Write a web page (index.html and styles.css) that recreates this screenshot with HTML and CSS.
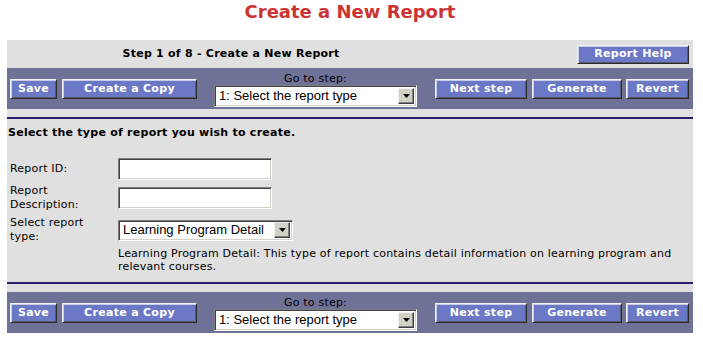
FILE: index.html
```html
<!DOCTYPE html>
<html>
<head>
<meta charset="utf-8">
<title>Create a New Report</title>
<link rel="stylesheet" href="styles.css">
</head>
<body>
<div class="page">
  <h1 class="title">Create a New Report</h1>
  <div class="panel">
    <div class="stepbar">
      <div class="step-title">Step 1 of 8 - Create a New Report</div>
      <button class="btn btn-help">Report Help</button>
    </div>
    <div class="toolbar">
      <button class="btn btn-save">Save</button>
      <button class="btn btn-copy">Create a Copy</button>
      <div class="goto">
        <div class="goto-label">Go to step:</div>
        <div class="select select-step">
          <span class="select-value">1: Select the report type</span>
          <span class="select-arrow"><svg width="7" height="4" viewBox="0 0 7 4"><path d="M0 0H7L3.5 4Z" fill="#000"/></svg></span>
        </div>
      </div>
      <button class="btn btn-next">Next step</button>
      <button class="btn btn-gen">Generate</button>
      <button class="btn btn-revert">Revert</button>
    </div>
    <div class="rule"></div>
    <div class="content">
      <div class="intro">Select the type of report you wish to create.</div>
      <div class="form">
        <label class="label">Report ID:</label>
        <div class="field"><input class="input" type="text"></div>
        <label class="label">Report Description:</label>
        <div class="field"><input class="input" type="text"></div>
        <label class="label">Select report type:</label>
        <div class="field">
          <div class="select select-type">
            <span class="select-value">Learning Program Detail</span>
            <span class="select-arrow"><svg width="7" height="4" viewBox="0 0 7 4"><path d="M0 0H7L3.5 4Z" fill="#000"/></svg></span>
          </div>
        </div>
        <div class="label"></div>
        <div class="desc">Learning Program Detail: This type of report contains detail information on learning program and relevant courses.</div>
      </div>
    </div>
    <div class="rule rule-bottom"></div>
    <div class="toolbar">
      <button class="btn btn-save">Save</button>
      <button class="btn btn-copy">Create a Copy</button>
      <div class="goto">
        <div class="goto-label">Go to step:</div>
        <div class="select select-step">
          <span class="select-value">1: Select the report type</span>
          <span class="select-arrow"><svg width="7" height="4" viewBox="0 0 7 4"><path d="M0 0H7L3.5 4Z" fill="#000"/></svg></span>
        </div>
      </div>
      <button class="btn btn-next">Next step</button>
      <button class="btn btn-gen">Generate</button>
      <button class="btn btn-revert">Revert</button>
    </div>
  </div>
</div>
</body>
</html>
```

FILE: styles.css
```css
html, body {
  margin: 0;
  padding: 0;
  background: #ffffff;
}
body {
  font-family: "DejaVu Sans", Verdana, sans-serif;
  font-size: 11px;
  letter-spacing: 0.2px;
  color: #000;
}
.page {
  width: 686px;
  padding-left: 7px;
}
.title {
  margin: 1px 0 17px 0;
  font-size: 18px;
  line-height: 22px;
  font-weight: bold;
  letter-spacing: 0;
  color: #cc3333;
  text-align: center;
}
.panel {
  background: #e0e0e0;
  width: 686px;
}
.stepbar {
  display: flex;
  align-items: center;
  height: 28px;
  padding-right: 4px;
}
.step-title {
  width: 448px;
  text-align: center;
  font-weight: bold;
  letter-spacing: 0.25px;
  line-height: 14px;
}
.btn {
  font-family: "DejaVu Sans", Verdana, sans-serif;
  font-size: 11px;
  font-weight: bold;
  color: #ffffff;
  background: #6b78c6;
  border: 1px solid;
  border-color: #f2f2f2 #2a2a2a #2a2a2a #f2f2f2;
  box-shadow: inset 1px 1px 0 #c8cce6, inset -1px -1px 0 #5a5a6a;
  height: 20px;
  padding: 0;
  line-height: 16px;
  text-align: center;
  letter-spacing: 0.3px;
}
.btn-help { width: 112px; margin-left: auto; height: 19px; }
.btn-save { width: 47px; }
.btn-copy { width: 135px; margin-left: 5px; }
.btn-next { width: 92px; margin-left: 18px; }
.btn-gen { width: 90px; margin-left: 5px; }
.btn-revert { width: 63px; margin-left: 4px; }
.toolbar {
  display: flex;
  align-items: center;
  background: #6f7297;
  height: 41px;
  padding: 0 4px 0 3px;
}
.goto {
  display: flex;
  flex-direction: column;
  align-items: center;
  margin-left: 17px;
  margin-top: 1px;
}
.goto-label {
  line-height: 13px;
  color: #000;
}
.select {
  display: flex;
  align-items: center;
  background: #ffffff;
  border: 1px solid;
  border-color: #808080 #ffffff #ffffff #808080;
  box-shadow: inset 1px 1px 0 #404040, inset -1px -1px 0 #d4d0c8;
  padding: 2px;
  box-sizing: border-box;
}
.select-value {
  flex: 1;
  font-family: "Liberation Sans", Arial, sans-serif;
  font-size: 13px;
  letter-spacing: 0;
  line-height: 16px;
  padding-left: 2px;
  white-space: nowrap;
  overflow: hidden;
}
.select-arrow {
  display: flex;
  align-items: center;
  justify-content: center;
  width: 16px;
  height: 16px;
  box-sizing: border-box;
  background: #d4d0c8;
  border: 1px solid;
  border-color: #f0f0f0 #404040 #404040 #f0f0f0;
  box-shadow: inset -1px -1px 0 #808080;
}
.select-step { width: 203px; height: 22px; }
.select-type { width: 175px; height: 21px; }
.rule {
  height: 2px;
  background: #2f1b6b;
  margin-top: 8px;
}
.rule-bottom {
  margin-top: 9px;
  margin-bottom: 8px;
}
.content {
  padding-left: 1px;
}
.intro {
  font-weight: bold;
  letter-spacing: 0.25px;
  line-height: 14px;
  padding-top: 7px;
}
.form {
  display: grid;
  grid-template-columns: 108px 1fr;
  column-gap: 0;
  row-gap: 4px;
  align-items: center;
  margin-top: 18px;
  padding-left: 2px;
}
.label {
  line-height: 14px;
  padding-right: 20px;
}
.field {
  display: flex;
  align-items: center;
}
.input {
  width: 154px;
  height: 22px;
  box-sizing: border-box;
  background: #ffffff;
  border: 1px solid;
  border-color: #808080 #ffffff #ffffff #808080;
  box-shadow: inset 1px 1px 0 #404040, inset -1px -1px 0 #d4d0c8;
  padding: 0 3px;
  margin: 0;
  font-family: "Liberation Sans", Arial, sans-serif;
  font-size: 13px;
}
.desc {
  line-height: 13px;
  margin-top: -1px;
  padding-right: 8px;
}
```
